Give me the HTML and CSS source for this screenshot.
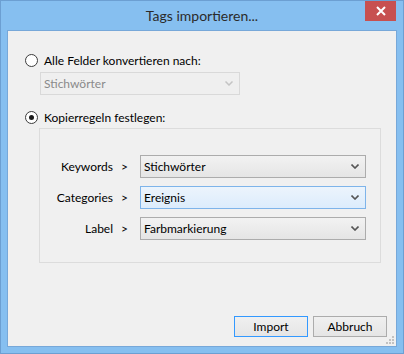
FILE: index.html
```html
<!doctype html>
<html lang="de">
<head>
    <meta charset="UTF-8">
    <title>Tags importieren...</title>
    <link rel="stylesheet" href="styles.css">
</head>
<body>
<div class="window">
    <div class="titlebar">
        <span></span>
        <span class="title">Tags importieren...</span>
        <button class="close" aria-label="Schließen">
            <svg width="10" height="10" viewBox="0 0 10 10">
                <path d="M1 1 L9 9 M9 1 L1 9" stroke="#fff" stroke-width="2"/>
            </svg>
        </button>
    </div>

    <div class="client">
        <label class="opt first">
            <span class="radio"></span>
            Alle Felder konvertieren nach:
        </label>
        <div class="combo disabled">
            <span>Stichwörter</span>
            <svg class="chev" width="8" height="5" viewBox="0 0 8 5">
                <path d="M0.5 0.5 L4 4 L7.5 0.5" fill="none" stroke="#c4c4c4" stroke-width="1.5"/>
            </svg>
        </div>

        <label class="opt second">
            <span class="radio checked"></span>
            Kopierregeln festlegen:
        </label>
        <div class="group">
            <div class="rules">
                <div class="rule-label">Keywords<span class="gt">&gt;</span></div>
                <div class="combo">
                    <span>Stichwörter</span>
                    <svg class="chev" width="8" height="5" viewBox="0 0 8 5">
                        <path d="M0.5 0.5 L4 4 L7.5 0.5" fill="none" stroke="#555" stroke-width="1.6"/>
                    </svg>
                </div>
                <div class="rule-label">Categories<span class="gt">&gt;</span></div>
                <div class="combo hot">
                    <span>Ereignis</span>
                    <svg class="chev" width="8" height="5" viewBox="0 0 8 5">
                        <path d="M0.5 0.5 L4 4 L7.5 0.5" fill="none" stroke="#555" stroke-width="1.6"/>
                    </svg>
                </div>
                <div class="rule-label">Label<span class="gt">&gt;</span></div>
                <div class="combo">
                    <span>Farbmarkierung</span>
                    <svg class="chev" width="8" height="5" viewBox="0 0 8 5">
                        <path d="M0.5 0.5 L4 4 L7.5 0.5" fill="none" stroke="#555" stroke-width="1.6"/>
                    </svg>
                </div>
            </div>
        </div>

        <div class="buttons">
            <button class="btn default">Import</button>
            <button class="btn">Abbruch</button>
        </div>

        <svg class="grip" width="9" height="9" viewBox="0 0 9 9">
            <rect x="6" y="0" width="2" height="2" fill="#c2c2c2"/>
            <rect x="3" y="3" width="2" height="2" fill="#c2c2c2"/>
            <rect x="6" y="3" width="2" height="2" fill="#c2c2c2"/>
            <rect x="0" y="6" width="2" height="2" fill="#c2c2c2"/>
            <rect x="3" y="6" width="2" height="2" fill="#c2c2c2"/>
            <rect x="6" y="6" width="2" height="2" fill="#c2c2c2"/>
        </svg>
    </div>
</div>
</body>
</html>
```

FILE: styles.css
```css
body {
    margin: 0;
    font-family: Lato, "Noto Sans", sans-serif;
    font-size: 12px;
    color: #000;
}

.window {
    width: 404px;
    height: 354px;
    box-sizing: border-box;
    border: 1px solid #6c9fd2;
    background-color: #86bff0;
    padding: 0 6px 6px 6px;
    display: flex;
    flex-direction: column;
}

.titlebar {
    height: 29px;
    display: grid;
    grid-template-columns: 1fr auto 1fr;
    align-items: start;
}

.title {
    font-size: 14px;
    color: #2b2b2b;
    line-height: 30px;
}

.close {
    justify-self: end;
    margin-right: 1px;
    width: 31px;
    height: 20px;
    border: none;
    padding: 0;
    background-color: #c75050;
    display: flex;
    align-items: center;
    justify-content: center;
}

.client {
    flex: 1;
    position: relative;
    border: 1px solid #77a8d9;
    background-color: #f0f0f0;
    padding: 0 0 0 17px;
    display: flex;
    flex-direction: column;
    align-items: flex-start;
}

.opt {
    height: 16px;
    display: flex;
    align-items: center;
    gap: 6px;
}

.opt.first {
    margin-top: 21px;
}

.opt.second {
    margin-top: 14px;
}

.radio {
    width: 13px;
    height: 13px;
    box-sizing: border-box;
    border: 1px solid #3c3c3c;
    border-radius: 50%;
    background-color: #fff;
    display: flex;
    align-items: center;
    justify-content: center;
}

.radio.checked::after {
    content: "";
    width: 5px;
    height: 5px;
    border-radius: 50%;
    background-color: #1a1a1a;
}

.combo {
    height: 23px;
    box-sizing: border-box;
    border: 1px solid #acacac;
    background: linear-gradient(#f2f2f2, #e5e5e5);
    display: flex;
    align-items: center;
    justify-content: space-between;
    padding: 0 6px 0 3px;
}

.combo.disabled {
    margin-top: 4px;
    margin-left: 15px;
    width: 200px;
    border-color: #d9d9d9;
    background: #efefef;
    color: #8a8a8a;
}

.combo.hot {
    border-color: #7eb4ea;
    background: linear-gradient(#ecf4fc, #dcecfc);
}

.group {
    margin-top: 3px;
    margin-left: 14px;
    width: 342px;
    height: 135px;
    box-sizing: border-box;
    border: 1px solid #dcdcdc;
    padding-top: 26px;
}

.rules {
    display: grid;
    grid-template-columns: 88px 226px;
    column-gap: 12px;
    row-gap: 8px;
    align-items: center;
}

.rule-label {
    text-align: right;
}

.gt {
    margin-left: 8px;
}

.buttons {
    margin-top: auto;
    align-self: flex-end;
    display: flex;
    gap: 5px;
    margin-right: 9px;
    margin-bottom: 9px;
}

.btn {
    width: 74px;
    height: 21px;
    box-sizing: border-box;
    border: 1px solid #acacac;
    background: linear-gradient(#f0f0f0, #e5e5e5);
    font-family: inherit;
    font-size: 12px;
    color: #000;
    padding: 0;
}

.btn.default {
    border-color: #3399ff;
}

.grip {
    position: absolute;
    right: 1px;
    bottom: 1px;
}
```
